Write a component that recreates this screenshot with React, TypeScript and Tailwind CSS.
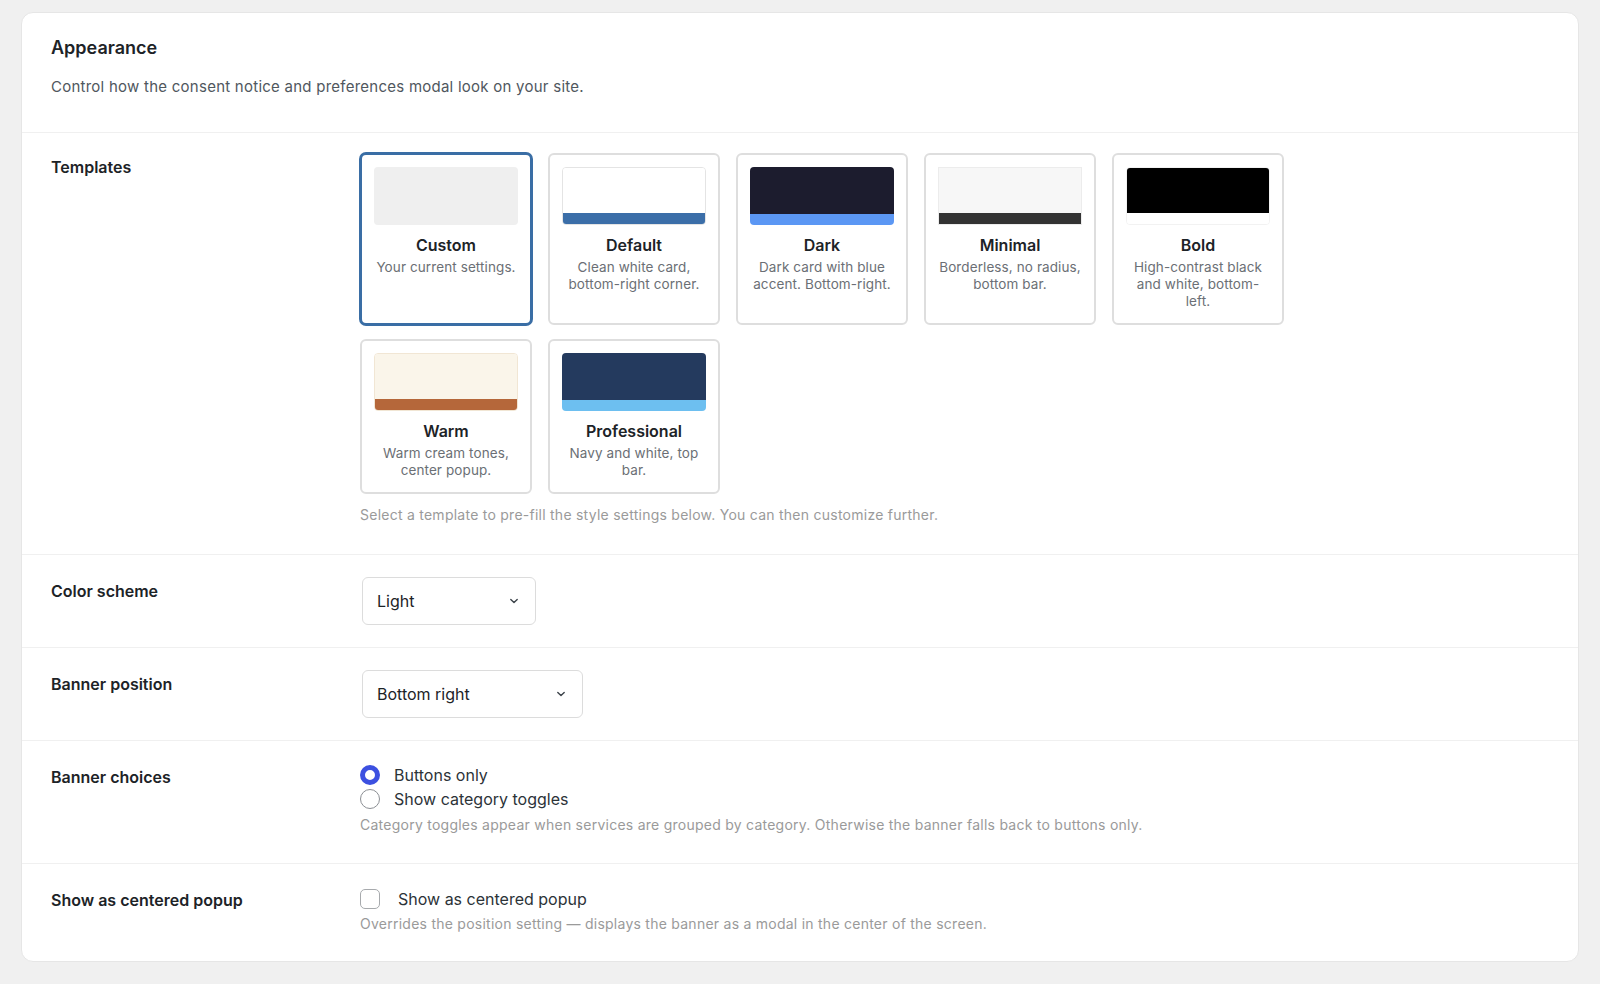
import React from "react";

type Tpl = {
  name: string;
  desc: string;
  top: string;
  bar?: string;
  border?: string;
  square?: boolean;
  selected?: boolean;
};

const templates: Tpl[] = [
  { name: "Custom", desc: "Your current settings.", top: "bg-[#efefef]", selected: true },
  { name: "Default", desc: "Clean white card, bottom-right corner.", top: "bg-white", bar: "bg-[#3b6ea8]", border: "border border-[#e4e4e4]" },
  { name: "Dark", desc: "Dark card with blue accent. Bottom-right.", top: "bg-[#1c1c2e]", bar: "bg-[#5b97f4]" },
  { name: "Minimal", desc: "Borderless, no radius, bottom bar.", top: "bg-[#f7f7f7]", bar: "bg-[#333333]", border: "border border-[#ececec]", square: true },
  { name: "Bold", desc: "High-contrast black and white, bottom-left.", top: "bg-black", bar: "bg-white", border: "border border-[#f2f2f2]" },
  { name: "Warm", desc: "Warm cream tones, center popup.", top: "bg-[#faf5ea]", bar: "bg-[#b5673a]", border: "border border-[#f1e6d4]" },
  { name: "Professional", desc: "Navy and white, top bar.", top: "bg-[#243a5e]", bar: "bg-[#6dbff0]" },
];

function TemplateCard({ t }: { t: Tpl }) {
  return (
    <div
      className={
        "flex flex-col items-center rounded-[6px] border-2 bg-white px-[12px] pb-[13px] pt-[12px] text-center " +
        (t.selected
          ? "border-[#3a6ea5] shadow-[0_0_0_1px_#3a6ea5]"
          : "border-[#dedede]")
      }
    >
      <div
        className={
          "flex h-[58px] w-full flex-col overflow-hidden " +
          (t.square ? "rounded-none " : "rounded-[4px] ") +
          (t.border ?? "")
        }
      >
        <div className={"flex-1 " + t.top} />
        {t.bar && <div className={"h-[11px] " + t.bar} />}
      </div>
      <div className="mt-[10px] text-[16px] font-semibold leading-[20px] text-[#1d2327]">
        {t.name}
      </div>
      <div className="mt-[4px] text-[13.5px] leading-[17px] tracking-[0.1px] text-[#6b6f75]">
        {t.desc}
      </div>
    </div>
  );
}

function Chevron() {
  return (
    <svg width="12" height="12" viewBox="0 0 12 12" fill="none">
      <path d="M2.8 4.5 L6 7.6 L9.2 4.5" stroke="#3c434a" strokeWidth="1.4" strokeLinecap="round" strokeLinejoin="round" />
    </svg>
  );
}

function Select({ value, width }: { value: string; width: string }) {
  return (
    <div
      className={
        "ml-[2px] flex h-[48px] items-center justify-between rounded-[6px] border border-[#dcdcdc] bg-white pl-[14px] pr-[15px] text-[16px] text-[#1d2327] " +
        width
      }
    >
      <span>{value}</span>
      <Chevron />
    </div>
  );
}

function Row({
  label,
  children,
  pb = "pb-[22px]",
  last = false,
  pt = "pt-[22px]",
}: {
  label: string;
  children: React.ReactNode;
  pb?: string;
  pt?: string;
  last?: boolean;
}) {
  return (
    <div
      className={
        "grid grid-cols-[309px_1fr] pl-[29px] pr-[28px] " +
        pt +
        " " +
        pb +
        (last ? "" : " border-b border-[#f0f0f0]")
      }
    >
      <div className="text-[16px] font-semibold leading-[28px] text-[#1d2327]">{label}</div>
      <div>{children}</div>
    </div>
  );
}

export default function App() {
  return (
    <div className="min-h-screen bg-[#f0f0f0] px-[21px] pb-[23px] pt-[12px] font-['Inter',sans-serif]">
      <div className="rounded-[12px] border border-[#e6e6e6] bg-white">
        <div className="border-b border-[#f0f0f0] pb-[34px] pl-[29px] pr-[28px] pt-[23px]">
          <h2 className="text-[18px] font-semibold leading-[24px] text-[#1d2327]">Appearance</h2>
          <p className="mt-[16px] text-[15px] leading-[22px] tracking-[0.25px] text-[#50575e]">
            Control how the consent notice and preferences modal look on your site.
          </p>
        </div>

        <Row label="Templates" pt="pt-[20px]" pb="pb-[29px]">
          <div className="grid grid-cols-[repeat(5,172px)] gap-x-[16px] gap-y-[14px]">
            {templates.map((t) => (
              <TemplateCard key={t.name} t={t} />
            ))}
          </div>
          <p className="mt-[11px] text-[14px] leading-[20px] tracking-[0.25px] text-[#9a9a9a]">
            Select a template to pre-fill the style settings below. You can then customize further.
          </p>
        </Row>

        <Row label="Color scheme">
          <Select value="Light" width="w-[174px]" />
        </Row>

        <Row label="Banner position">
          <Select value="Bottom right" width="w-[221px]" />
        </Row>

        <Row label="Banner choices" pb="pb-[28px]">
          <div className="flex h-[24px] items-center gap-[14px] text-[16px] text-[#2c3338]">
            <span className="box-border h-[20px] w-[20px] rounded-full border-[5px] border-[#3c50e0] bg-white" />
            <span>Buttons only</span>
          </div>
          <div className="flex h-[24px] items-center gap-[14px] text-[16px] text-[#2c3338]">
            <span className="box-border h-[20px] w-[20px] rounded-full border border-[#8c8f94] bg-white" />
            <span>Show category toggles</span>
          </div>
          <p className="mt-[4px] text-[14px] leading-[20px] tracking-[0.25px] text-[#9a9a9a]">
            Category toggles appear when services are grouped by category. Otherwise the banner falls back to buttons only.
          </p>
        </Row>

        <Row label="Show as centered popup" pb="pb-[27px]" last>
          <div className="flex h-[26px] items-center gap-[18px] text-[16px] text-[#2c3338]">
            <span className="box-border h-[20px] w-[20px] rounded-[5px] border border-[#a7aaad] bg-white" />
            <span>Show as centered popup</span>
          </div>
          <p className="mt-[2px] text-[14px] leading-[20px] tracking-[0.25px] text-[#9a9a9a]">
            Overrides the position setting — displays the banner as a modal in the center of the screen.
          </p>
        </Row>
      </div>
    </div>
  );
}
